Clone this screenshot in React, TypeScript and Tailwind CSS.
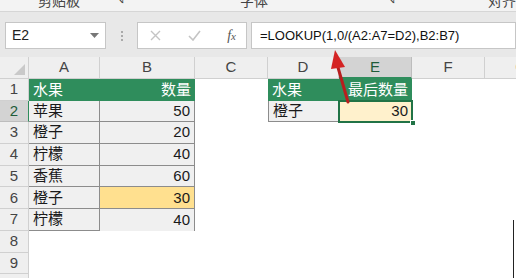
import React from 'react'

const COLS = [
  { key: 'A', w: 71 },
  { key: 'B', w: 95 },
  { key: 'C', w: 73 },
  { key: 'D', w: 71 },
  { key: 'E', w: 73 },
  { key: 'F', w: 73 },
  { key: 'G', w: 73 },
]

const ROW_H = 'h-[21.7px]'

type Cell = { text?: string; right?: boolean; cls?: string }

// contenido de las celdas por fila (A..F)
const DATA: Record<number, Record<string, Cell>> = {
  1: {
    A: { text: '水果', cls: 'bg-[#2f8d5c] text-white' },
    B: { text: '数量', right: true, cls: 'bg-[#2f8d5c] text-white' },
    D: { text: '水果', cls: 'bg-[#2f8d5c] text-white' },
    E: { text: '最后数量', right: true, cls: 'bg-[#2f8d5c] text-white' },
  },
  2: {
    A: { text: '苹果', cls: 'bg-[#f0f0f0] border-r border-b border-[#8c8c8c]' },
    B: { text: '50', right: true, cls: 'bg-[#f0f0f0] border-r border-b border-[#8c8c8c]' },
    D: { text: '橙子', cls: 'bg-[#f0f0f0] border-r border-b border-l border-[#8c8c8c]' },
  },
  3: {
    A: { text: '橙子', cls: 'bg-[#f0f0f0] border-r border-b border-[#8c8c8c]' },
    B: { text: '20', right: true, cls: 'bg-[#f0f0f0] border-r border-b border-[#8c8c8c]' },
  },
  4: {
    A: { text: '柠檬', cls: 'bg-[#f0f0f0] border-r border-b border-[#8c8c8c]' },
    B: { text: '40', right: true, cls: 'bg-[#f0f0f0] border-r border-b border-[#8c8c8c]' },
  },
  5: {
    A: { text: '香蕉', cls: 'bg-[#f0f0f0] border-r border-b border-[#8c8c8c]' },
    B: { text: '60', right: true, cls: 'bg-[#f0f0f0] border-r border-b border-[#8c8c8c]' },
  },
  6: {
    A: { text: '橙子', cls: 'bg-[#f0f0f0] border-r border-b border-[#8c8c8c]' },
    B: { text: '30', right: true, cls: 'bg-[#ffe08f] border-r border-b border-[#8c8c8c]' },
  },
  7: {
    A: { text: '柠檬', cls: 'bg-[#f0f0f0] border-r border-b border-[#8c8c8c]' },
    B: { text: '40', right: true, cls: 'bg-[#f0f0f0] border-r border-[#8c8c8c]' },
  },
}

const FONT = "font-['DengXian','Liberation_Sans','Noto_Sans_CJK_SC',sans-serif]"

function GridRow({ n }: { n: number }) {
  const row = DATA[n] || {}
  const selected = n === 2
  return (
    <div className={`flex ${ROW_H}`}>
      <div
        className={`w-[29px] shrink-0 flex items-center justify-center text-[15px] border-r border-b ${
          selected
            ? 'bg-[#d3d3d3] text-[#1f5c3a] border-r-[#2f8d5c] border-b-[#bdbdbd]'
            : 'bg-[#efefef] text-[#444] border-[#d0d0d0]'
        }`}
      >
        {n}
      </div>
      {COLS.map(c => {
        const cell = row[c.key]
        if (n === 2 && c.key === 'E') {
          return (
            <div key={c.key} style={{ width: c.w }} className="shrink-0 relative">
              <div className="absolute inset-[-1px] border-2 border-[#217346] bg-[#fff1cc] flex items-center justify-end pr-[3px] text-[15px] text-[#1a1a1a]">
                30
              </div>
              <div className="absolute right-[-4px] bottom-[-4px] w-[6px] h-[6px] bg-[#217346] border border-white" />
            </div>
          )
        }
        return (
          <div
            key={c.key}
            style={{ width: c.w }}
            className={`shrink-0 flex items-center px-[4px] text-[15px] text-[#1a1a1a] ${
              cell?.right ? 'justify-end' : ''
            } ${cell?.cls ?? 'bg-white'}`}
          >
            {cell?.text}
          </div>
        )
      })}
    </div>
  )
}

export default function App() {
  return (
    <div className={`w-[516px] h-[278px] overflow-hidden bg-white relative ${FONT}`}>
      {/* Ribbon recortado */}
      <div className="h-[12px] bg-[#f3f3f3] border-b border-[#d6d6d6] relative text-[14px] text-[#444] leading-none">
        <span className="absolute left-[38px] top-[-6px]">剪贴板</span>
        <span className="absolute left-[115px] top-[-4px] text-[10px]">↘</span>
        <span className="absolute left-[240px] top-[-6px]">字体</span>
        <span className="absolute left-[386px] top-[-4px] text-[10px]">↘</span>
        <span className="absolute left-[488px] top-[-6px]">对齐</span>
      </div>

      {/* Barra de fórmulas */}
      <div className="h-[45px] bg-[#e8e8e8] flex items-start pt-[10px] pl-[5px]">
        <div className="w-[101px] h-[27px] bg-white border border-[#c6c6c6] flex items-center justify-between px-[6px]">
          <span className="text-[14px] text-[#222]">E2</span>
          <svg width="9" height="6" viewBox="0 0 9 6">
            <path d="M0 0 L9 0 L4.5 5 Z" fill="#777" />
          </svg>
        </div>
        <div className="w-[31px] h-[27px] flex items-center justify-center">
          <div className="flex flex-col gap-[2px]">
            <span className="w-[2px] h-[2px] bg-[#aaa]" />
            <span className="w-[2px] h-[2px] bg-[#aaa]" />
            <span className="w-[2px] h-[2px] bg-[#aaa]" />
          </div>
        </div>
        <div className="w-[110px] h-[27px] bg-white border border-[#c6c6c6] flex items-center pl-[12px] pr-[10px] justify-between">
          <svg width="11" height="11" viewBox="0 0 11 11">
            <path d="M1 1 L10 10 M10 1 L1 10" stroke="#c4c4c4" strokeWidth="1.4" />
          </svg>
          <svg width="13" height="11" viewBox="0 0 13 11">
            <path d="M1 6 L5 10 L12 1" stroke="#c4c4c4" strokeWidth="1.6" fill="none" />
          </svg>
          <span className="font-['Liberation_Serif',serif] italic text-[14px] text-[#555]">
            f<span className="text-[11px]">x</span>
          </span>
        </div>
        <div className="ml-[4px] flex-1 h-[27px] bg-white border border-[#c6c6c6] flex items-center pl-[8px] text-[13px] text-[#111]">
          =LOOKUP(1,0/(A2:A7=D2),B2:B7)
        </div>
      </div>

      {/* Encabezados de columna */}
      <div className="flex h-[22px] bg-[#efefef]">
        <div className="w-[29px] shrink-0 border-r border-b border-[#d0d0d0] relative">
          <svg className="absolute right-[3px] bottom-[3px]" width="11" height="11" viewBox="0 0 11 11">
            <path d="M11 0 L11 11 L0 11 Z" fill="#c9c9c9" />
          </svg>
        </div>
        {COLS.map(c => (
          <div
            key={c.key}
            style={{ width: c.w }}
            className={`shrink-0 flex items-center justify-center text-[15px] border-r ${
              c.key === 'E'
                ? 'bg-[#d3d3d3] text-[#1f5c3a] border-b-2 border-b-[#2f8d5c] border-r-[#bdbdbd]'
                : 'text-[#444] border-b border-[#d0d0d0]'
            }`}
          >
            {c.key}
          </div>
        ))}
      </div>

      {/* Filas */}
      {[1, 2, 3, 4, 5, 6, 7, 8, 9, 10].map(n => (
        <GridRow key={n} n={n} />
      ))}

      {/* Borde derecho */}
      <div className="absolute right-[2px] top-[220px] bottom-0 w-[1px] bg-[#222]" />

      {/* Flecha roja */}
      <svg className="absolute left-0 top-0 pointer-events-none" width="516" height="278">
        <line x1="348" y1="102" x2="337" y2="64" stroke="#b81e1e" strokeWidth="3" strokeLinecap="round" />
        <path d="M335 50 L345 67 L331 69 Z" fill="#d42323" />
      </svg>
    </div>
  )
}
